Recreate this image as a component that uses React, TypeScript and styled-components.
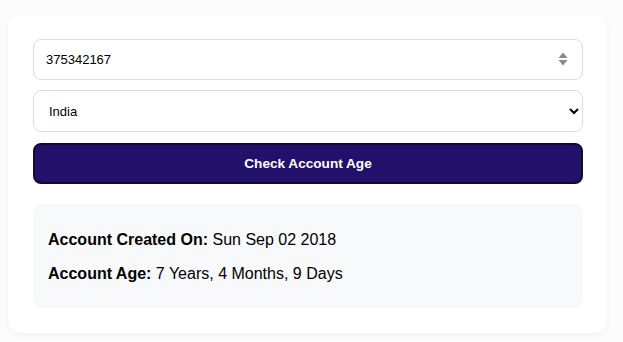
import React, { useState } from "react";
import styled, { createGlobalStyle } from "styled-components";

const Global = createGlobalStyle`
  html, body { margin: 0; padding: 0; background: #fcfcfc; }
  body { font-family: "Liberation Sans", Arial, sans-serif; }
`;

const Page = styled.div`
  padding: 16px 16px 9px 8px;
`;

const Card = styled.div`
  background: #ffffff;
  border-radius: 12px;
  box-shadow: 0 2px 6px rgba(0, 0, 0, 0.05);
  padding: 23px 24px 25px 25px;
  display: flex;
  flex-direction: column;
`;

const Field = styled.div`
  position: relative;
  margin-bottom: 10px;
`;

const Input = styled.input`
  box-sizing: border-box;
  width: 100%;
  height: 41px;
  padding: 0 12px;
  border: 1px solid #dddddd;
  border-radius: 8px;
  font-family: "Liberation Sans", Arial, sans-serif;
  font-size: 13px;
  color: #000;
  background: #fff;
  outline: none;
`;

const Spinner = styled.svg`
  position: absolute;
  right: 15px;
  top: 13px;
`;

const Select = styled.select`
  box-sizing: border-box;
  width: 100%;
  height: 42px;
  padding: 0 8px 0 11px;
  border: 1px solid #dddddd;
  border-radius: 8px;
  font-family: "Liberation Sans", Arial, sans-serif;
  font-size: 13px;
  color: #000;
  background: #fff;
  margin-bottom: 11px;
  outline: none;
`;

const Button = styled.button`
  box-sizing: border-box;
  width: 100%;
  height: 41px;
  border: 2px solid #110a2e;
  border-radius: 8px;
  background: #23106a;
  color: #ffffff;
  font-family: "Liberation Sans", Arial, sans-serif;
  font-weight: bold;
  font-size: 13.6px;
  cursor: pointer;
  margin-bottom: 20px;
`;

const Result = styled.div`
  background: #f7f9fa;
  border-radius: 8px;
  padding: 27px 15px 25px;
  display: flex;
  flex-direction: column;
  gap: 16px;
`;

const Line = styled.p`
  margin: 0;
  font-size: 16px;
  line-height: 18px;
  color: #000;
`;

export default function App() {
  const [id, setId] = useState("375342167");
  const [country, setCountry] = useState("India");
  return (
    <Page>
      <Global />
      <Card>
        <Field>
          <Input value={id} onChange={(e) => setId(e.target.value)} />
          <Spinner width="10" height="14" viewBox="0 0 10 14">
            <path d="M5 0.5 L9.5 6 L0.5 6 Z" fill="#8a8a8a" />
            <path d="M5 13.5 L9.5 8 L0.5 8 Z" fill="#8a8a8a" />
          </Spinner>
        </Field>
        <Select value={country} onChange={(e) => setCountry(e.target.value)}>
          <option>India</option>
          <option>United States</option>
          <option>United Kingdom</option>
        </Select>
        <Button>Check Account Age</Button>
        <Result>
          <Line>
            <strong>Account Created On:</strong> Sun Sep 02 2018
          </Line>
          <Line>
            <strong>Account Age:</strong> 7 Years, 4 Months, 9 Days
          </Line>
        </Result>
      </Card>
    </Page>
  );
}
